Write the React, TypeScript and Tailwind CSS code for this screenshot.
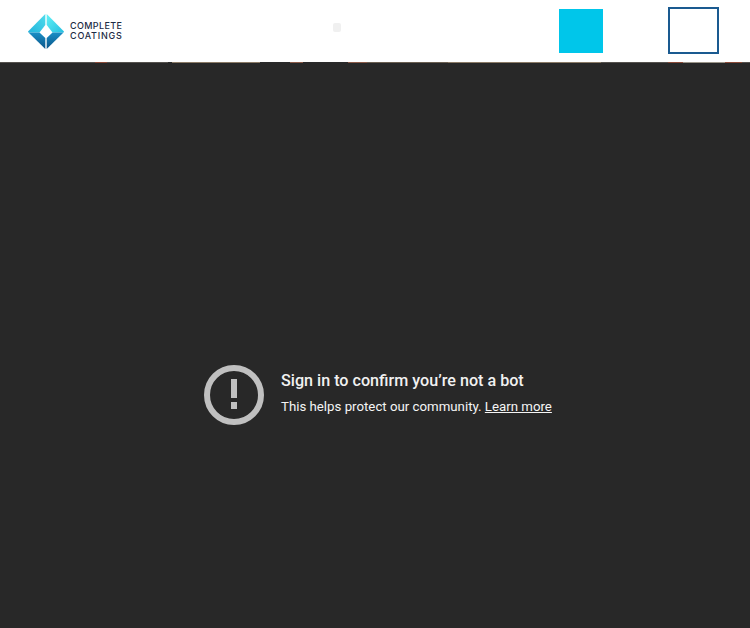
const seam = [
  { w: 95, c: 'bg-[#55524e]' },
  { w: 12, c: 'bg-[#8a4a38]' },
  { w: 61, c: 'bg-[#55524e]' },
  { w: 4, c: 'bg-[#2a2a2a]' },
  { w: 88, c: 'bg-[#8a7a66]' },
  { w: 30, c: 'bg-[#2a2a2a]' },
  { w: 13, c: 'bg-[#8a5a48]' },
  { w: 45, c: 'bg-[#2a2a2a]' },
  { w: 19, c: 'bg-[#8a5a48]' },
  { w: 81, c: 'bg-[#6a5f52]' },
  { w: 153, c: 'bg-[#8a7a66]' },
  { w: 67, c: 'bg-[#55524e]' },
  { w: 15, c: 'bg-[#8a4a38]' },
  { w: 42, c: 'bg-[#9a9488]' },
  { w: 17, c: 'bg-[#8a4a38]' },
  { w: 8, c: 'bg-[#55524e]' },
]

function Logo() {
  return (
    <svg width="36" height="35" viewBox="0 0 36 35" aria-hidden="true">
      <defs>
        <linearGradient id="logoLeft" x1="0" y1="1" x2="1" y2="0">
          <stop offset="0" stopColor="#22b4dc" />
          <stop offset="1" stopColor="#4fdcec" />
        </linearGradient>
        <linearGradient id="logoRight" x1="0" y1="0" x2="1" y2="1">
          <stop offset="0" stopColor="#62f2f6" />
          <stop offset="1" stopColor="#25bfe0" />
        </linearGradient>
        <linearGradient id="logoBottom" x1="0" y1="0" x2="0" y2="1">
          <stop offset="0" stopColor="#1a8fc6" />
          <stop offset="1" stopColor="#0b5488" />
        </linearGradient>
      </defs>
      <path d="M17.3 0 L17.3 11 L11.5 18.5 L0.5 18.5 L0 17.5 Z" fill="url(#logoLeft)" />
      <path d="M18.7 0 L36 17.5 L35.5 18.5 L24.5 18.5 L18.7 11 Z" fill="url(#logoRight)" />
      <path d="M0.5 18.5 L11.5 18.5 L17.3 24 L17.3 35 Z" fill="url(#logoBottom)" />
      <path d="M35.5 18.5 L24.5 18.5 L18.7 24 L18.7 35 Z" fill="url(#logoBottom)" />
    </svg>
  )
}

function AlertIcon() {
  return (
    <svg className="shrink-0" width="60" height="60" viewBox="0 0 60 60" aria-hidden="true">
      <circle cx="30" cy="30" r="27" fill="none" stroke="#c0c0c0" strokeWidth="6" />
      <rect x="27" y="14" width="6" height="19" fill="#c0c0c0" />
      <rect x="27" y="37" width="6" height="7" fill="#c0c0c0" />
    </svg>
  )
}

export default function App() {
  return (
    <div className="flex h-[628px] w-[750px] flex-col overflow-hidden bg-[#282828] font-['Roboto',sans-serif]">
      <header className="flex h-[62px] shrink-0 items-center bg-white pl-[28px]">
        <Logo />
        <div className="ml-[6px] w-[53px] font-['Inter',sans-serif] text-[9px] leading-[10px] font-medium text-[#1c2b45]">
          <div className="tracking-[0.36px]">COMPLETE</div>
          <div className="tracking-[0.78px]">COATINGS</div>
        </div>
        <div className="mb-[8px] ml-[210px] h-[9px] w-[8px] rounded-[2px] bg-[#f0f0f0]" />
        <div className="ml-[218px] h-[44px] w-[44px] bg-[#00c6ea]" />
        <div className="mb-px ml-[65px] h-[47px] w-[51px] border-2 border-[#1a5a90]" />
      </header>
      <div className="flex h-px shrink-0">
        {seam.map((s, i) => (
          <div key={i} className={s.c} style={{ width: s.w }} />
        ))}
      </div>
      <main className="flex flex-1 items-center justify-center pt-[99px] pl-[5px]">
        <div className="flex w-[347px] items-center gap-[17px]">
          <AlertIcon />
          <div className="pb-[3px]">
            <h1 className="text-[16.15px] leading-[22px] font-medium whitespace-nowrap text-[#f1f1f1]">Sign in to confirm you’re not a bot</h1>
            <p className="mt-[5px] text-[13.25px] leading-[20px] whitespace-nowrap text-[#f5f5f5]">
              This helps protect our community. <span className="underline">Learn more</span>
            </p>
          </div>
        </div>
      </main>
    </div>
  )
}
